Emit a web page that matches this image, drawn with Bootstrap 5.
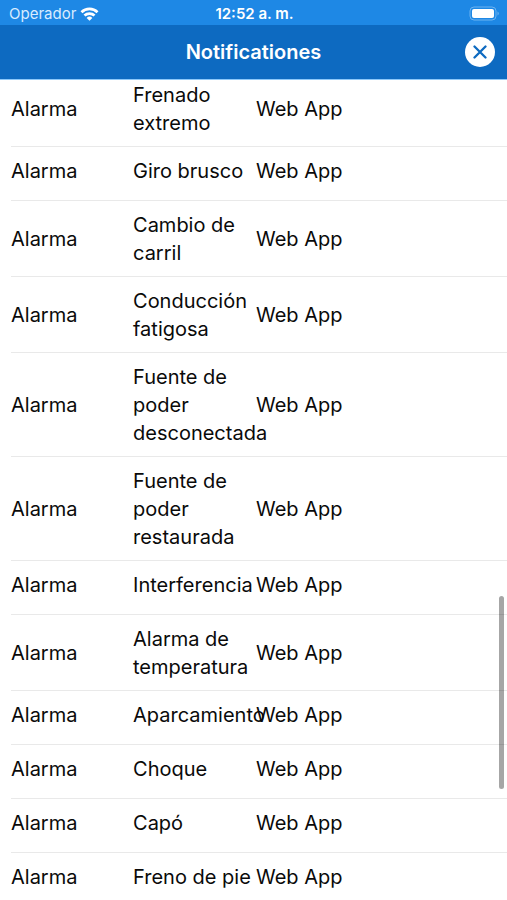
<!DOCTYPE html>
<html lang="es">
<head>
<meta charset="utf-8">
<meta name="viewport" content="width=device-width, initial-scale=1">
<title>Notificationes</title>
<link href="https://cdn.jsdelivr.net/npm/bootstrap@5.3.0/dist/css/bootstrap.min.css" rel="stylesheet">
<style>
  body { font-family: Inter, "Liberation Sans", sans-serif; color: #0a0a0a; }
  .status-bar { background: #1e88e5; height: 25px; padding: 2px 7px 0 9px; font-size: 15px; line-height: 23px; }
  .status-bar .carrier { color: #d8ecff; }
  .status-bar .clock { font-weight: 600; }
  .title-bar { background: #0d6ac1; height: 55px; padding: 0 12px; border-bottom: 1px solid #8cc8fa; }
  .title-bar h1 { font-size: 20px; line-height: 28px; font-weight: 600; }
  .close-btn { width: 30px; height: 30px; color: #0d6ac1; }
  .list-wrap { padding-left: 11px; }
  .alerts { table-layout: fixed; font-size: 20px; line-height: 28px; }
  .alerts tr { border-bottom: 1px solid #e9e9e9; }
  .alerts td { padding: 10px 0 9px; }
  .alerts .one-line td { padding-bottom: 15px; }
  .alerts tr:first-child td { padding-top: 1px; }
  .col-kind { width: 24.6%; }
  .col-name { width: 24.8%; }
  .scroll-thumb { right: 3px; top: 57.3vh; width: 5px; height: 21.5vh; background: rgba(0,0,0,.35); }
</style>
<script src="https://cdn.jsdelivr.net/npm/bootstrap@5.3.0/dist/js/bootstrap.bundle.min.js"></script>
</head>
<body>
<div class="vh-100 d-flex flex-column overflow-hidden bg-white">
  <header class="flex-shrink-0 text-white">
    <div class="status-bar d-flex align-items-center">
      <div class="col d-flex align-items-center gap-1">
        <span class="carrier">Operador</span>
        <svg width="19" height="14" viewBox="0 0 20 15" fill="none" stroke="#fff" stroke-width="2.9" aria-hidden="true">
          <path d="M1.4 5.6a12.3 12.3 0 0 1 17.2 0"/>
          <path d="M4.6 9.2a7.8 7.8 0 0 1 10.8 0"/>
          <path d="M10 14.8 6.9 11.7a4.4 4.4 0 0 1 6.2 0z" fill="#fff" stroke="none"/>
        </svg>
      </div>
      <div class="clock">12:52 a. m.</div>
      <div class="col d-flex justify-content-end">
        <svg width="31" height="15" viewBox="0 0 31 15" aria-hidden="true">
          <rect x="1" y="1" width="26" height="13" rx="4" fill="none" stroke="#6db3f0"/>
          <rect x="3" y="3" width="22" height="9" rx="2" fill="#fff"/>
          <path d="M28.5 5.5a2.2 2.2 0 0 1 0 4z" fill="#6db3f0"/>
        </svg>
      </div>
    </div>
    <div class="title-bar d-flex align-items-center">
      <div class="col"></div>
      <h1 class="m-0">Notificationes</h1>
      <div class="col d-flex justify-content-end">
        <button type="button" class="close-btn btn p-0 border-0 rounded-circle bg-white d-flex align-items-center justify-content-center" aria-label="Cerrar">
          <svg width="14" height="14" viewBox="0 0 14 14" fill="none" stroke="currentColor" stroke-width="2.3" stroke-linecap="round" aria-hidden="true"><path d="M1.5 1.5l11 11M12.5 1.5l-11 11"/></svg>
        </button>
      </div>
    </div>
  </header>
  <main class="list-wrap flex-grow-1 overflow-hidden position-relative">
    <table class="alerts w-100">
      <colgroup><col class="col-kind"><col class="col-name"><col></colgroup>
      <tbody>
        <tr><td>Alarma</td><td>Frenado extremo</td><td>Web App</td></tr>
        <tr class="one-line"><td>Alarma</td><td>Giro brusco</td><td>Web App</td></tr>
        <tr><td>Alarma</td><td>Cambio de carril</td><td>Web App</td></tr>
        <tr><td>Alarma</td><td>Conducción fatigosa</td><td>Web App</td></tr>
        <tr><td>Alarma</td><td>Fuente de poder desconectada</td><td>Web App</td></tr>
        <tr><td>Alarma</td><td>Fuente de poder restaurada</td><td>Web App</td></tr>
        <tr class="one-line"><td>Alarma</td><td>Interferencia</td><td>Web App</td></tr>
        <tr><td>Alarma</td><td>Alarma de temperatura</td><td>Web App</td></tr>
        <tr class="one-line"><td>Alarma</td><td>Aparcamiento</td><td>Web App</td></tr>
        <tr class="one-line"><td>Alarma</td><td>Choque</td><td>Web App</td></tr>
        <tr class="one-line"><td>Alarma</td><td>Capó</td><td>Web App</td></tr>
        <tr class="one-line"><td>Alarma</td><td>Freno de pie</td><td>Web App</td></tr>
      </tbody>
    </table>
    <div class="scroll-thumb position-absolute rounded-pill"></div>
  </main>
</div>
</body>
</html>
